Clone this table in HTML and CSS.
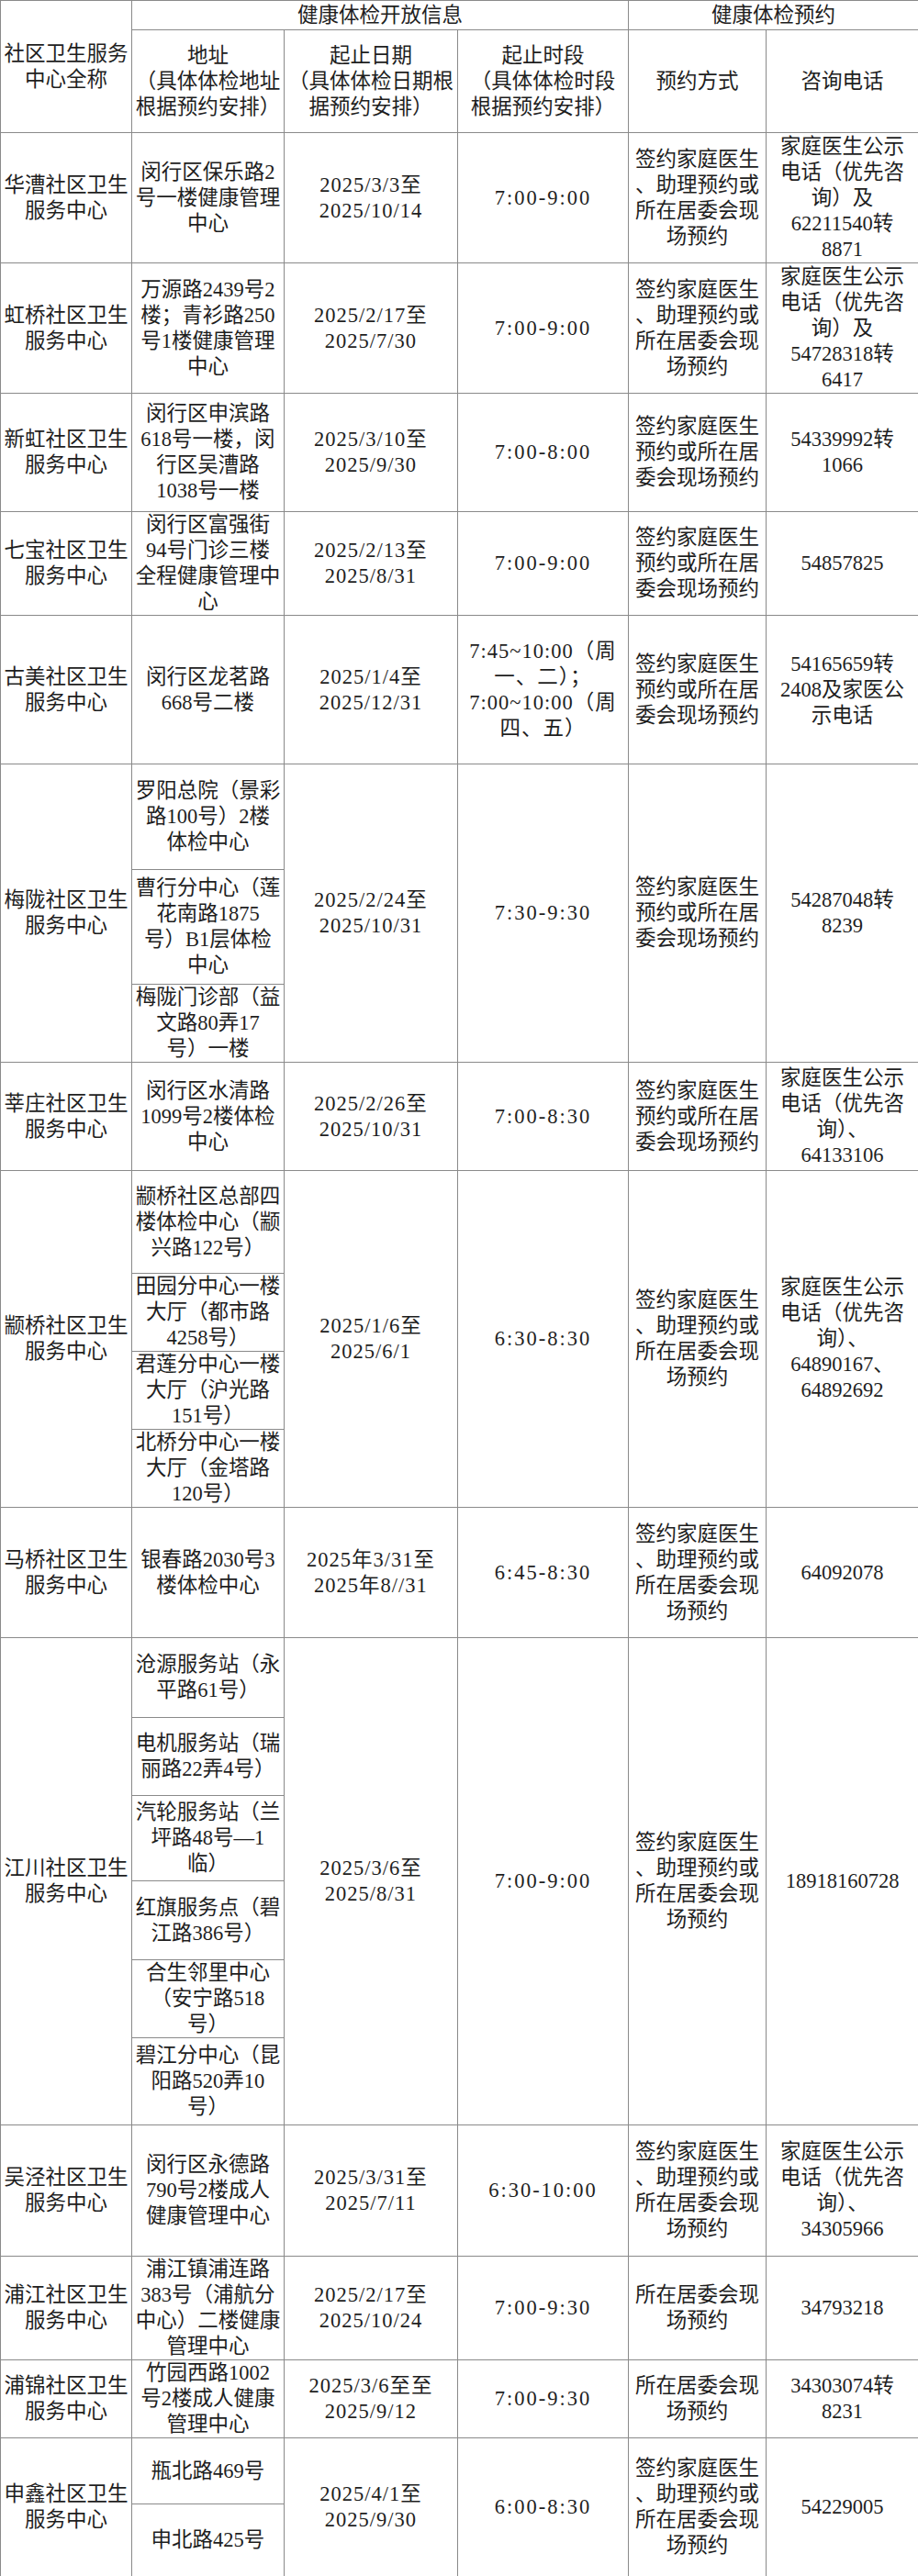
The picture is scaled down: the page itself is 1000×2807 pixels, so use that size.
FILE: index.html
```html
<!DOCTYPE html>
<html lang="zh-CN">
<head>
<meta charset="utf-8">
<title>社区卫生服务中心健康体检开放信息</title>
<link rel="stylesheet" href="styles.css">
</head>
<body>
<table class="sched">
<colgroup>
<col class="c-name"><col class="c-addr"><col class="c-date"><col class="c-time"><col class="c-way"><col class="c-tel">
</colgroup>
<thead>
<tr class="h32">
<th rowspan="2">社区卫生服务<br>中心全称</th>
<th colspan="3">健康体检开放信息</th>
<th colspan="2">健康体检预约</th>
</tr>
<tr class="h112">
<th>地址<br>（具体体检地址<br>根据预约安排）</th>
<th>起止日期<br>（具体体检日期根<br>据预约安排）</th>
<th>起止时段<br>（具体体检时段<br>根据预约安排）</th>
<th>预约方式</th>
<th>咨询电话</th>
</tr>
</thead>
<tbody>
<tr class="h142">
<td>华漕社区卫生<br>服务中心</td>
<td>闵行区保乐路2<br>号一楼健康管理<br>中心</td>
<td class="d">2025/3/3至<br>2025/10/14</td>
<td class="t">7:00-9:00</td>
<td>签约家庭医生<br>、助理预约或<br>所在居委会现<br>场预约</td>
<td>家庭医生公示<br>电话（优先咨<br>询）及<br>62211540转<br>8871</td>
</tr>
<tr class="h142">
<td>虹桥社区卫生<br>服务中心</td>
<td>万源路2439号2<br>楼；青衫路250<br>号1楼健康管理<br>中心</td>
<td class="d">2025/2/17至<br>2025/7/30</td>
<td class="t">7:00-9:00</td>
<td>签约家庭医生<br>、助理预约或<br>所在居委会现<br>场预约</td>
<td>家庭医生公示<br>电话（优先咨<br>询）及<br>54728318转<br>6417</td>
</tr>
<tr class="h129">
<td>新虹社区卫生<br>服务中心</td>
<td>闵行区申滨路<br>618号一楼，闵<br>行区吴漕路<br>1038号一楼</td>
<td class="d">2025/3/10至<br>2025/9/30</td>
<td class="t">7:00-8:00</td>
<td>签约家庭医生<br>预约或所在居<br>委会现场预约</td>
<td>54339992转<br>1066</td>
</tr>
<tr class="h113">
<td>七宝社区卫生<br>服务中心</td>
<td>闵行区富强街<br>94号门诊三楼<br>全程健康管理中<br>心</td>
<td class="d">2025/2/13至<br>2025/8/31</td>
<td class="t">7:00-9:00</td>
<td>签约家庭医生<br>预约或所在居<br>委会现场预约</td>
<td>54857825</td>
</tr>
<tr class="h162">
<td>古美社区卫生<br>服务中心</td>
<td>闵行区龙茗路<br>668号二楼</td>
<td class="d">2025/1/4至<br>2025/12/31</td>
<td class="t2">7:45~10:00（周<br>一、二）；<br>7:00~10:00（周<br>四、五）</td>
<td>签约家庭医生<br>预约或所在居<br>委会现场预约</td>
<td>54165659转<br>2408及家医公<br>示电话</td>
</tr>
<tr class="h115">
<td rowspan="3">梅陇社区卫生<br>服务中心</td>
<td>罗阳总院（景彩<br>路100号）2楼<br>体检中心</td>
<td class="d" rowspan="3">2025/2/24至<br>2025/10/31</td>
<td class="t" rowspan="3">7:30-9:30</td>
<td rowspan="3">签约家庭医生<br>预约或所在居<br>委会现场预约</td>
<td rowspan="3">54287048转<br>8239</td>
</tr>
<tr class="h125">
<td>曹行分中心（莲<br>花南路1875<br>号）B1层体检<br>中心</td>
</tr>
<tr class="h85">
<td>梅陇门诊部（益<br>文路80弄17<br>号）一楼</td>
</tr>
<tr class="h118">
<td>莘庄社区卫生<br>服务中心</td>
<td>闵行区水清路<br>1099号2楼体检<br>中心</td>
<td class="d">2025/2/26至<br>2025/10/31</td>
<td class="t">7:00-8:30</td>
<td>签约家庭医生<br>预约或所在居<br>委会现场预约</td>
<td>家庭医生公示<br>电话（优先咨<br>询）、<br>64133106</td>
</tr>
<tr class="h112">
<td rowspan="4">颛桥社区卫生<br>服务中心</td>
<td>颛桥社区总部四<br>楼体检中心（颛<br>兴路122号）</td>
<td class="d" rowspan="4">2025/1/6至<br>2025/6/1</td>
<td class="t" rowspan="4">6:30-8:30</td>
<td rowspan="4">签约家庭医生<br>、助理预约或<br>所在居委会现<br>场预约</td>
<td rowspan="4">家庭医生公示<br>电话（优先咨<br>询）、<br>64890167、<br>64892692</td>
</tr>
<tr class="h85">
<td>田园分中心一楼<br>大厅（都市路<br>4258号）</td>
</tr>
<tr class="h85">
<td>君莲分中心一楼<br>大厅（沪光路<br>151号）</td>
</tr>
<tr class="h85">
<td>北桥分中心一楼<br>大厅（金塔路<br>120号）</td>
</tr>
<tr class="h142">
<td>马桥社区卫生<br>服务中心</td>
<td>银春路2030号3<br>楼体检中心</td>
<td class="d">2025年3/31至<br>2025年8//31</td>
<td class="t">6:45-8:30</td>
<td>签约家庭医生<br>、助理预约或<br>所在居委会现<br>场预约</td>
<td>64092078</td>
</tr>
<tr class="h87">
<td rowspan="6">江川社区卫生<br>服务中心</td>
<td>沧源服务站（永<br>平路61号）</td>
<td class="d" rowspan="6">2025/3/6至<br>2025/8/31</td>
<td class="t" rowspan="6">7:00-9:00</td>
<td rowspan="6">签约家庭医生<br>、助理预约或<br>所在居委会现<br>场预约</td>
<td rowspan="6">18918160728</td>
</tr>
<tr class="h85">
<td>电机服务站（瑞<br>丽路22弄4号）</td>
</tr>
<tr class="h93">
<td>汽轮服务站（兰<br>坪路48号—1<br>临）</td>
</tr>
<tr class="h86">
<td>红旗服务点（碧<br>江路386号）</td>
</tr>
<tr class="h85">
<td>合生邻里中心<br>（安宁路518<br>号）</td>
</tr>
<tr class="h95">
<td>碧江分中心（昆<br>阳路520弄10<br>号）</td>
</tr>
<tr class="h143">
<td>吴泾社区卫生<br>服务中心</td>
<td>闵行区永德路<br>790号2楼成人<br>健康管理中心</td>
<td class="d">2025/3/31至<br>2025/7/11</td>
<td class="t">6:30-10:00</td>
<td>签约家庭医生<br>、助理预约或<br>所在居委会现<br>场预约</td>
<td>家庭医生公示<br>电话（优先咨<br>询）、<br>34305966</td>
</tr>
<tr class="h113">
<td>浦江社区卫生<br>服务中心</td>
<td>浦江镇浦连路<br>383号（浦航分<br>中心）二楼健康<br>管理中心</td>
<td class="d">2025/2/17至<br>2025/10/24</td>
<td class="t">7:00-9:30</td>
<td>所在居委会现<br>场预约</td>
<td>34793218</td>
</tr>
<tr class="h85">
<td>浦锦社区卫生<br>服务中心</td>
<td>竹园西路1002<br>号2楼成人健康<br>管理中心</td>
<td class="d">2025/3/6至至<br>2025/9/12</td>
<td class="t">7:00-9:30</td>
<td>所在居委会现<br>场预约</td>
<td>34303074转<br>8231</td>
</tr>
<tr class="h72">
<td rowspan="2">申鑫社区卫生<br>服务中心</td>
<td>瓶北路469号</td>
<td class="d" rowspan="2">2025/4/1至<br>2025/9/30</td>
<td class="t" rowspan="2">6:00-8:30</td>
<td rowspan="2">签约家庭医生<br>、助理预约或<br>所在居委会现<br>场预约</td>
<td rowspan="2">54229005</td>
</tr>
<tr class="h79">
<td>申北路425号</td>
</tr>
</tbody>
</table>
</body>
</html>
```

FILE: styles.css
```css
html, body {
  margin: 0;
  padding: 0;
  background: #ffffff;
}

body {
  font-family: "Liberation Serif", "Noto Sans CJK SC", serif;
  color: #1e1e1e;
}

.sched {
  width: 1000px;
  border-collapse: collapse;
  table-layout: fixed;
  font-size: 22.5px;
  line-height: 28px;
}

.c-name { width: 143px; }
.c-addr { width: 166px; }
.c-date { width: 189px; }
.c-time { width: 186px; }
.c-way  { width: 150px; }
.c-tel  { width: 166px; }

.sched th,
.sched td {
  border: 1px solid #8a8a8a;
  padding: 0 2px;
  text-align: center;
  vertical-align: middle;
  font-weight: normal;
  white-space: nowrap;
  overflow: hidden;
}

.sched .d { letter-spacing: 1px; }
.sched .t { letter-spacing: 2px; }
.sched .t2 { letter-spacing: 1px; }

.h32  { height: 32px; }
.h72  { height: 72px; }
.h79  { height: 79px; }
.h85  { height: 85px; }
.h86  { height: 86px; }
.h87  { height: 87px; }
.h93  { height: 93px; }
.h95  { height: 95px; }
.h112 { height: 112px; }
.h113 { height: 113px; }
.h115 { height: 115px; }
.h118 { height: 118px; }
.h125 { height: 125px; }
.h129 { height: 129px; }
.h142 { height: 142px; }
.h143 { height: 143px; }
.h162 { height: 162px; }
```
